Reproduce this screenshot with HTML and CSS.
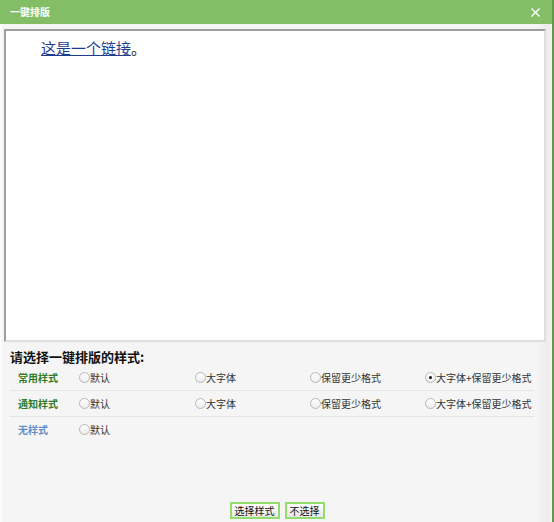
FILE: index.html
```html
<!DOCTYPE html>
<html lang="zh-CN">
<head>
<meta charset="utf-8">
<title>一键排版</title>
<link rel="stylesheet" href="styles.css">
</head>
<body>
<div class="dialog">
  <div class="titlebar">
    <span class="title">一键排版</span>
    <svg class="close" width="9" height="9" viewBox="0 0 9 9"><path d="M0.5 0.5 L8.5 8.5 M8.5 0.5 L0.5 8.5" stroke="#fff" stroke-width="1.4" fill="none"/></svg>
  </div>
  <div class="content">
    <div class="editor">
      <p class="para"><a class="link" href="#">这是一个链接</a>。</p>
    </div>
    <div class="heading">请选择一键排版的样式:</div>
    <div class="styles">
      <div class="row">
        <span class="label green">常用样式</span>
        <span class="opt"><i class="radio"></i>默认</span>
        <span class="opt"><i class="radio"></i>大字体</span>
        <span class="opt"><i class="radio"></i>保留更少格式</span>
        <span class="opt"><i class="radio checked"></i>大字体+保留更少格式</span>
      </div>
      <div class="row">
        <span class="label green">通知样式</span>
        <span class="opt"><i class="radio"></i>默认</span>
        <span class="opt"><i class="radio"></i>大字体</span>
        <span class="opt"><i class="radio"></i>保留更少格式</span>
        <span class="opt"><i class="radio"></i>大字体+保留更少格式</span>
      </div>
      <div class="row last">
        <span class="label blue">无样式</span>
        <span class="opt"><i class="radio"></i>默认</span>
      </div>
    </div>
    <div class="buttons">
      <button class="btn">选择样式</button>
      <button class="btn">不选择</button>
    </div>
  </div>
</div>
</body>
</html>
```
FILE: styles.css
```css
html, body {
  margin: 0;
  padding: 0;
  background: #f5f5f5;
}
body {
  font-family: "Noto Sans CJK SC", sans-serif;
  color: #222;
}
.dialog {
  width: 552px;
  height: 522px;
  display: flex;
  flex-direction: column;
  border-right: 2px solid #5d9a49;
  background: linear-gradient(to right, #f5f5f5 0, #f5f5f5 536px, #ececec 548px, #f3f3f3 552px);
}
.titlebar {
  height: 24px;
  flex: none;
  background: #83be67;
  display: flex;
  align-items: center;
  justify-content: space-between;
  padding: 0 12px 0 10px;
}
.title {
  color: #fff;
  font-size: 10px;
  font-weight: bold;
  line-height: 24px;
}
.close {
  display: block;
}
.content {
  flex: 1;
  display: flex;
  flex-direction: column;
  padding: 5px 0 0 4px;
  border-left: 2px solid #fbfbfb;
}
.editor {
  width: 538px;
  height: 309px;
  margin-left: -2px;
  background: #fff;
  border: 2px solid;
  border-color: #9d9d9d #dedede #dedede #9d9d9d;
  flex: none;
}
.para {
  margin: 0;
  padding: 7px 0 0 35px;
  font-size: 15px;
  line-height: 20px;
  color: #000;
}
.link {
  color: #1f3d8f;
  text-decoration: underline;
}
.heading {
  margin: 7px 0 0 4px;
  font-size: 13px;
  font-weight: bold;
  line-height: 16px;
  color: #111;
}
.styles {
  margin: 0 0 0 4px;
  width: 524px;
}
.row {
  display: grid;
  grid-template-columns: 68px 116px 115px 115px 110px;
  align-items: center;
  height: 25px;
  border-bottom: 1px solid #e4e4e4;
  font-size: 10px;
}
.row.last {
  border-bottom: none;
}
.label {
  padding-left: 8px;
  font-weight: bold;
}
.green {
  color: #2e7d2e;
}
.blue {
  color: #5e8fc8;
}
.opt {
  display: flex;
  align-items: center;
  color: #333;
  white-space: nowrap;
}
.radio {
  display: inline-block;
  width: 9px;
  height: 9px;
  margin-left: 1px;
  border: 1px solid #b8b8b8;
  border-radius: 50%;
  background: linear-gradient(#fff, #ececec);
  position: relative;
}
.radio.checked::after {
  content: "";
  position: absolute;
  left: 3px;
  top: 3px;
  width: 3px;
  height: 3px;
  border-radius: 50%;
  background: #111;
}
.buttons {
  margin-top: auto;
  margin-bottom: 3px;
  display: flex;
  justify-content: center;
  gap: 5px;
  padding-right: 4px;
}
.btn {
  height: 17px;
  padding: 0 3px;
  font-family: "Noto Sans CJK SC", sans-serif;
  font-size: 10px;
  line-height: 13px;
  color: #111;
  border: 2px solid #93dd6c;
  background: linear-gradient(#ffffff, #e6e6e6);
  border-radius: 0;
}
```
